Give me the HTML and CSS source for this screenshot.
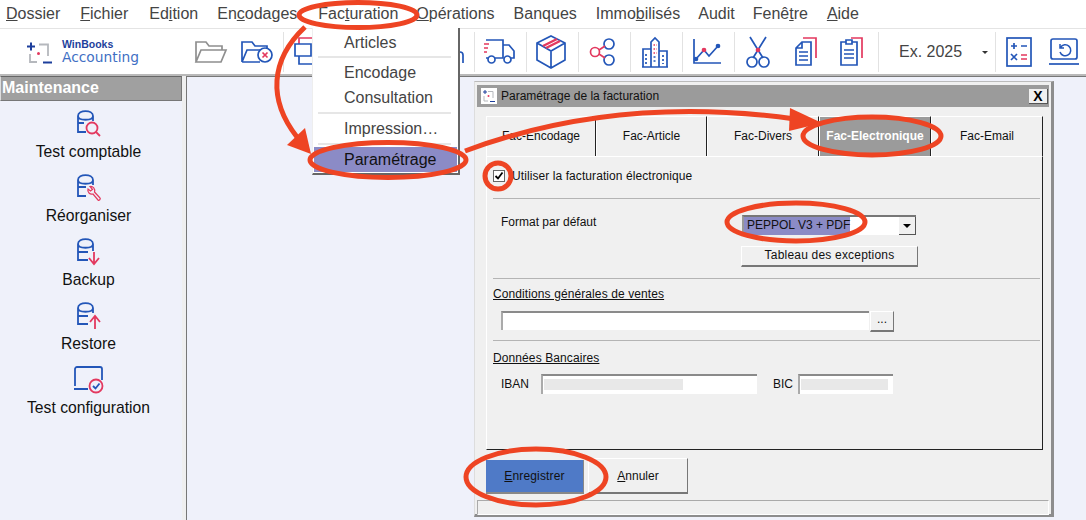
FILE: index.html
```html
<!DOCTYPE html>
<html lang="fr">
<head>
<meta charset="utf-8">
<title>WinBooks Accounting</title>
<link rel="stylesheet" href="styles.css">
</head>
<body>
<div class="app">
  <nav class="menubar">
    <span class="m m1"><u>D</u>ossier</span>
    <span class="m m2"><u>F</u>ichier</span>
    <span class="m m3">Ed<u>i</u>tion</span>
    <span class="m m4">En<u>c</u>odages</span>
    <span class="m m5">Fac<u>t</u>uration</span>
    <span class="m m6"><u>O</u>pérations</span>
    <span class="m m7">Banques</span>
    <span class="m m8">Immo<u>b</u>ilisés</span>
    <span class="m m9">Audit</span>
    <span class="m m10">Fenê<u>t</u>re</span>
    <span class="m m11"><u>A</u>ide</span>
  </nav>

  <header class="toolbar">
    <div class="logo">
      <svg class="logo-mark" width="30" height="26" viewBox="0 0 30 26" fill="none">
        <path d="M1 6.500H9M5 2.500V10.500" stroke="#1d3f9c" stroke-width="2"/>
        <path d="M13 4.500H22V16M4 14V22H11" stroke="#b5b8bd" stroke-width="1.800"/>
        <circle cx="12.500" cy="13.500" r="1.500" fill="#e3395f"/>
        <path d="M17 22.500H26" stroke="#1d3f9c" stroke-width="2"/>
      </svg>
      <div class="logo-text"><span class="logo-brand">WinBooks</span><span class="logo-prod">Accounting</span></div>
    </div>
    <div class="tool tool-a">
      <svg width="34" height="24" viewBox="0 0 34 24" fill="none" stroke="#8f8f8f"><path d="M2 22V2H12L15 6H28V10M2 22H27L32 10H7L2 22Z"/></svg>
    </div>
    <div class="tool tool-b">
      <svg width="34" height="24" viewBox="0 0 34 24" fill="none" stroke="#2356b8"><path d="M2 22V2H12L15 6H27V9M2 22H20M2 22L7 10H20"/><circle cx="25" cy="15" r="7"/><path d="M22.500 12.500L27.500 17.500M27.500 12.500L22.500 17.500" stroke="#e3395f"/></svg>
    </div>
    <div class="tool">
      <svg width="30" height="32" viewBox="0 0 30 32" fill="none"><path d="M6 8V2H22" stroke="#e3395f"/><path d="M2 8H18V20H2ZM6 20V28H24" stroke="#2356b8"/></svg>
    </div>
    <div class="tool"></div>
    <div class="tool tool-c">
      <svg width="30" height="30" viewBox="0 0 30 30" fill="none" stroke="#2356b8"><path d="M22 26V18C22 14 28 14 28 18V26"/></svg>
    </div>
    <div class="tool">
      <svg width="32" height="26" viewBox="0 0 32 26" fill="none" stroke="#2356b8"><path d="M3 1H20V19H12M20 6H26L31 12V19H28M3 19H5"/><path d="M1 5H6M1 9H5M1 13H4" stroke="#e3395f"/><circle cx="8.500" cy="20.500" r="3.500"/><circle cx="24.500" cy="20.500" r="3.500"/></svg>
    </div>
    <div class="tool">
      <svg width="32" height="36" viewBox="0 0 32 36" fill="none" stroke="#2356b8"><path d="M16 2L30 9V26L16 34L2 26V9ZM2 9L16 17L30 9M16 17V34"/><path d="M8 12L22 5M11 14L25 7" stroke="#e3395f" stroke-width="2.500"/></svg>
    </div>
    <div class="tool">
      <svg width="28" height="30" viewBox="0 0 28 30" fill="none"><circle cx="20" cy="7" r="5" stroke="#2356b8"/><circle cx="20" cy="23" r="5" stroke="#2356b8"/><circle cx="6" cy="15" r="4.500" stroke="#e3395f"/><path d="M10 13L16 9M10 17L16 21" stroke="#e3395f"/></svg>
    </div>
    <div class="tool">
      <svg width="28" height="32" viewBox="0 0 28 32" fill="none" stroke="#2356b8"><path d="M10 31V6L14 2L18 6V31M10 31V13H2V31M18 31V15H26V31M1 31H27"/><path d="M12.500 9H15.500M12.500 13H15.500M12.500 17H15.500" stroke="#e3395f" stroke-dasharray="1.500 1"/><path d="M12.500 21H15.500M12.500 25H15.500M5 18V28M22 19V28" stroke-dasharray="2 2"/></svg>
    </div>
    <div class="tool">
      <svg width="30" height="28" viewBox="0 0 30 28" fill="none" stroke="#2356b8"><path d="M2 1V25H29"/><path d="M4 21L12 12L17 18L26 8"/><circle cx="4" cy="21" r="1.500" fill="#2356b8"/><circle cx="12" cy="12" r="1.500" fill="#e3395f" stroke="#e3395f"/><circle cx="26" cy="8" r="1.500" fill="#2356b8"/></svg>
    </div>
    <div class="tool tool-wide">
      <svg class="ico-sc" width="24" height="32" viewBox="0 0 24 32" fill="none" stroke="#2356b8"><path d="M4 1L17 22M20 1L7 22"/><circle cx="6" cy="26" r="5"/><circle cx="18" cy="26" r="5"/><circle cx="12" cy="14" r="1.500" fill="#e3395f" stroke="#e3395f"/></svg>
      <svg class="ico-doc" width="24" height="32" viewBox="0 0 24 32" fill="none"><path d="M9 2H22V22" stroke="#e3395f"/><path d="M8 6H17V29H2V12ZM8 6V12H2" stroke="#2356b8"/><path d="M5 16H14M5 20H14M5 24H14" stroke="#2356b8"/></svg>
      <svg class="ico-clip" width="24" height="32" viewBox="0 0 24 32" fill="none"><path d="M12 2H23V22" stroke="#e3395f"/><path d="M7 6H2V29H18V6H13M7 4H13V8H7ZM5 14H15M5 18H15M5 22H15" stroke="#2356b8"/></svg>
    </div>
    <div class="exercise"><span class="ex-label">Ex. 2025</span><span class="ex-arrow"></span></div>
    <div class="tool tool-calc">
      <svg width="26" height="30" viewBox="0 0 26 30" fill="none"><rect x="1" y="1" width="24" height="28" stroke="#2356b8"/><path d="M5 9H11M8 6V12M15 9H21M5 17L11 23M11 17L5 23" stroke="#2356b8"/><path d="M15 18H21M15 22H21" stroke="#e3395f"/></svg>
    </div>
    <div class="tool tool-last">
      <svg width="30" height="28" viewBox="0 0 30 28" fill="none" stroke="#2356b8"><rect x="2" y="1" width="26" height="20" rx="2"/><path d="M0 26H30"/><path d="M11 6L11 10H15M11.500 9.500A5.500 5.500 0 1 1 11 14" stroke-width="1.500"/></svg>
    </div>
  </header>

  <div class="main">
    <aside class="sidebar">
      <div class="side-head">Maintenance</div>
      <div class="side-list">
        <div class="side-item">
          <svg class="side-ico" width="26" height="28" viewBox="0 0 26 28" fill="none" stroke-width="1.800"><path d="M2 6C2 -0.500 17 -0.500 17 6V11M2 6C2 11 17 11 17 6M2 6V22H10M2 13H8" stroke="#2356b8"/><circle cx="16" cy="18" r="5.500" stroke="#e3395f"/><path d="M20 22L24 26" stroke="#e3395f"/></svg>
          <span>Test comptable</span>
        </div>
        <div class="side-item">
          <svg class="side-ico" width="26" height="28" viewBox="0 0 26 28" fill="none" stroke-width="1.800"><path d="M2 6C2 -0.500 17 -0.500 17 6V11M2 6C2 11 17 11 17 6M2 6V22H10M2 13H10" stroke="#2356b8"/><path d="M12 15C11 18 14 21 17 20L22 26C23 27 25 25 24 24L18.500 18C19.500 15 17 12 14 12.500L16.500 15.500L14.500 17Z" stroke="#e3395f" stroke-width="1.200"/></svg>
          <span>Réorganiser</span>
        </div>
        <div class="side-item">
          <svg class="side-ico" width="26" height="28" viewBox="0 0 26 28" fill="none" stroke-width="1.800"><path d="M2 6C2 -0.500 17 -0.500 17 6V13M2 6C2 11 17 11 17 6M2 6V22H12M2 14H12" stroke="#2356b8"/><path d="M18 14V25M13 20L18 26L23 20" stroke="#e3395f"/></svg>
          <span>Backup</span>
        </div>
        <div class="side-item">
          <svg class="side-ico" width="26" height="28" viewBox="0 0 26 28" fill="none" stroke-width="1.800"><path d="M2 6C2 -0.500 17 -0.500 17 6V11M2 6C2 11 17 11 17 6M2 6V22H12M2 14H12" stroke="#2356b8"/><path d="M19 27V14M14 20L19 14L24 20" stroke="#e3395f"/></svg>
          <span>Restore</span>
        </div>
        <div class="side-item">
          <svg class="side-ico side-wide" width="30" height="28" viewBox="0 0 30 28" fill="none" stroke-width="1.800"><path d="M1 20V3C1 2 2 1 3 1H26C27 1 28 2 28 3V14" stroke="#2356b8"/><path d="M0 23H14" stroke="#2356b8" stroke-width="2"/><circle cx="22" cy="20" r="6.500" stroke="#e3395f"/><path d="M19 20L21.500 22.500L25.500 17.500" stroke="#2356b8"/></svg>
          <span>Test configuration</span>
        </div>
      </div>
    </aside>
    <div class="splitter"></div>
    <div class="workspace"></div>
  </div>
</div>

<div class="dropdown">
  <div class="dd-item">Articles</div>
  <div class="dd-sep dd-sep1"></div>
  <div class="dd-item">Encodage</div>
  <div class="dd-item">Consultation</div>
  <div class="dd-sep"></div>
  <div class="dd-item">Impression…</div>
  <div class="dd-sep dd-sep3"></div>
  <div class="dd-item dd-active">Paramétrage</div>
</div>

<section class="dialog">
  <div class="titlebar">
    <svg class="title-ico" width="16" height="16" viewBox="0 0 16 16" fill="none"><rect width="16" height="16" fill="#fff"/><path d="M2 4H6M4 2V6" stroke="#1d3f9c"/><path d="M7 3.500H12V10M3 8V13H7" stroke="#b5b8bd"/><circle cx="7.500" cy="8" r="1" fill="#e3395f"/><path d="M9 13.500H14" stroke="#1d3f9c"/></svg>
    <span class="title-text">Paramétrage de la facturation</span>
    <span class="close">X</span>
  </div>
  <div class="tabs">
    <div class="tab t1">Fac-Encodage</div>
    <div class="tab t2">Fac-Article</div>
    <div class="tab t3">Fac-Divers</div>
    <div class="tab t4 tab-on">Fac-Electronique</div>
    <div class="tab t5">Fac-Email</div>
  </div>
  <div class="panel">
    <div class="sec sec1">
      <span class="check"><svg width="10" height="10" viewBox="0 0 10 10" fill="none" stroke="#000" stroke-width="1.800"><path d="M1.500 5L4 7.500L8.500 1.500"/></svg></span>
      <span>Utiliser la facturation électronique</span>
    </div>
    <div class="sec sec2">
      <div class="fmt-row">
        <span class="fmt-label">Format par défaut</span>
        <div class="combo"><span class="combo-val">PEPPOL V3 + PDF</span><span class="combo-btn"></span></div>
      </div>
      <div class="btn btn-exc">Tableau des exceptions</div>
    </div>
    <div class="sec sec3">
      <div class="sec-title">Conditions générales de ventes</div>
      <div class="cond-row"><div class="field field-cond"></div><div class="btn btn-dots">...</div></div>
    </div>
    <div class="sec sec4">
      <div class="sec-title">Données Bancaires</div>
      <div class="bank-row">
        <span class="lbl-iban">IBAN</span>
        <div class="field field-iban"><span class="mask mask-iban"></span></div>
        <span class="lbl-bic">BIC</span>
        <div class="field field-bic"><span class="mask mask-bic"></span></div>
      </div>
    </div>
  </div>
  <div class="actions">
    <div class="btn-save"><u>E</u>nregistrer</div>
    <div class="btn-cancel"><u>A</u>nnuler</div>
  </div>
  <div class="status"></div>
</section>

<svg class="annot" width="1086" height="520" viewBox="0 0 1086 520" fill="none" stroke="#ee4423" stroke-width="5">
  <ellipse cx="358" cy="15" rx="59" ry="12.500"/>
  <path d="M305 27C270 60 268 100 297 137"/>
  <path d="M311 154L287 145L305 128Z" fill="#ee4423" stroke="none"/>
  <ellipse cx="388" cy="160" rx="78" ry="17.500"/>
  <path d="M465 151C570 112 680 103 795 119"/>
  <path d="M822 123L789 131L790 108Z" fill="#ee4423" stroke="none"/>
  <ellipse cx="872" cy="136" rx="69" ry="19"/>
  <circle cx="498" cy="176" r="13"/>
  <ellipse cx="796" cy="222" rx="69" ry="19"/>
  <ellipse cx="536" cy="477" rx="70" ry="28"/>
</svg>
</body>
</html>
```

FILE: styles.css
```css
* { box-sizing: border-box; }
html, body { margin: 0; padding: 0; }
body {
  width: 1086px;
  height: 520px;
  overflow: hidden;
  position: relative;
  font-family: "Liberation Sans", Arial, sans-serif;
  background: #eff1fa;
}
.app { display: flex; flex-direction: column; height: 520px; }

/* menu bar */
.menubar {
  display: flex;
  height: 29px;
  align-items: center;
  background: #fff;
  border-bottom: 1px solid #e4e4e4;
  font-size: 16px;
  color: #444;
  padding-left: 6px;
  flex: none;
}
.m { white-space: nowrap; }
.m2 { margin-left: 20px; }
.m3 { margin-left: 21px; }
.m4 { margin-left: 19px; }
.m5 { margin-left: 21px; }
.m6 { margin-left: 18px; }
.m7 { margin-left: 19px; }
.m8 { margin-left: 19px; }
.m9 { margin-left: 18px; }
.m10 { margin-left: 18px; }
.m11 { margin-left: 19px; }

/* toolbar */
.toolbar {
  display: flex;
  height: 47px;
  flex: none;
  background: #fff;
  border-bottom: 2px solid #b9b9b9;
  padding-top: 3px;
}
.logo { width: 188px; flex: none; display: flex; align-items: center; padding-left: 26px; }
.logo-mark { flex: none; }
.logo-text { display: flex; flex-direction: column; margin-left: 6px; margin-top: -3px; }
.logo-brand { font: bold 10.500px/11px "Liberation Sans", sans-serif; color: #1d3f9c; }
.logo-prod { font: 13.800px/14px "DejaVu Sans", sans-serif; color: #3f6fc4; }
.tool {
  width: 52px;
  flex: none;
  display: flex;
  align-items: center;
  justify-content: center;
  border-right: 1px solid #e2e2e2;
  height: 40px;
  padding-right: 3px;
}
.tool svg { stroke-width: 1.700px; }
.tool-a { width: 46px; border-right: 0; padding-right: 0; }
.tool-b { width: 50px; }
.tool-c { width: 87px; justify-content: flex-end; padding-right: 9px; }
.tool-wide { width: 144px; justify-content: flex-start; padding-left: 11px; }
.ico-doc { margin-left: 24px; }
.ico-clip { margin-left: 21px; }
.exercise {
  width: 117px;
  flex: none;
  height: 40px;
  display: flex;
  align-items: center;
  border-right: 1px solid #e2e2e2;
  padding-left: 20px;
  font-size: 16px;
  color: #444;
}
.ex-arrow {
  margin-left: 20px;
  border-left: 3px solid transparent;
  border-right: 3px solid transparent;
  border-top: 3px solid #333;
}
.tool-calc { width: 46px; border-right: 0; padding-right: 0; }
.tool-last { width: 44px; border-right: 0; padding-right: 0; }

/* main area */
.main { flex: 1; display: flex; min-height: 0; }
.sidebar { width: 182px; flex: none; background: #eff1fa; }
.side-head {
  height: 25px;
  background: #a0a0a0;
  border: 1px solid #777;
  border-left-color: #ddd;
  border-top-color: #666;
  color: #fff;
  font-weight: bold;
  font-size: 16px;
  line-height: 22px;
  padding-left: 1px;
}
.side-list { display: flex; flex-direction: column; padding: 9px 5px 0 0; }
.side-item {
  height: 64px;
  display: flex;
  flex-direction: column;
  align-items: center;
  font-size: 15.700px;
  color: #111;
}
.side-ico { display: block; height: 28px; margin-bottom: 4px; flex: none; }
.side-item span { line-height: 20px; }
.splitter { width: 5px; flex: none; background: #efefef; border-right: 1px solid #777; }
.workspace { flex: 1; background: #eff1fa; border-top: 1px solid #777; }

/* dropdown */
.dropdown {
  position: absolute;
  left: 312px;
  top: 28px;
  width: 148px;
  height: 147px;
  background: #fff;
  border-right: 2px solid #666;
  border-bottom: 2px solid #666;
  border-left: 1px solid #eee;
  padding: 3px 1px 0;
  font-size: 16px;
  color: #444;
}
.dd-item { height: 25px; line-height: 24px; padding-left: 30px; }
.dd-sep { height: 2px; margin: 1px 6px 3px 4px; background: #e6e6e6; }
.dd-sep1 { margin-top: 0; margin-bottom: 3px; }
.dd-sep3 { margin-bottom: 2px; }
.dd-active { background: #8b8bc6; color: #111; line-height: 26px; }

/* dialog */
.dialog {
  position: absolute;
  left: 474px;
  top: 81px;
  width: 580px;
  height: 436px;
  background: #f0f0f0;
  border-right: 3px solid #8d8d8d;
  border-bottom: 3px solid #8d8d8d;
  border-top: 1px solid #bbb;
  border-left: 1px solid #ddd;
  padding: 3px 2px 0;
  font-size: 12px;
  color: #111;
}
.titlebar {
  height: 22px;
  background: #9b9b9b;
  display: flex;
  align-items: center;
  padding-left: 4px;
  padding-right: 1px;
}
.title-ico { flex: none; }
.title-text { margin-left: 4px; flex: 1; color: #111; font-size: 12px; }
.close {
  width: 19px;
  height: 15px;
  background: #f0f0f0;
  border-right: 1px solid #555;
  border-bottom: 1px solid #555;
  font-weight: bold;
  font-size: 14px;
  line-height: 14px;
  text-align: center;
  color: #000;
}
.tabs { display: flex; margin: 9px 0 0 9px; height: 40px; }
.tab {
  height: 40px;
  border-top: 1px solid #fff;
  border-left: 1px solid #fff;
  border-right: 1px solid #222;
  line-height: 38px;
  text-align: center;
}
.t1 { width: 110px; }
.t2 { width: 111px; }
.t3 { width: 112px; }
.t4 { width: 112px; }
.t5 { width: 112px; }
.tab-on { background: #9b9b9b; color: #fff; font-weight: bold; }
.panel {
  margin-left: 9px;
  width: 557px;
  height: 294px;
  border-top: 1px solid #fff;
  border-left: 1px solid #fff;
  border-right: 1px solid #222;
  border-bottom: 1px solid #222;
  padding: 0 2px 0 6px;
}
.sec { border-bottom: 1px solid #b4b4b4; }
.sec1 { height: 42px; display: flex; align-items: center; padding-bottom: 3px; gap: 7px; letter-spacing: .08px; }
.check {
  width: 12px;
  height: 12px;
  background: #fff;
  border: 1px solid #666;
  display: flex;
  align-items: center;
  justify-content: center;
}
.sec2 { height: 80px; padding: 16px 0 0 8px; }
.fmt-row { display: flex; align-items: flex-start; }
.fmt-label { width: 241px; line-height: 14px; }
.combo {
  width: 174px;
  height: 20px;
  background: #fff;
  border-top: 2px solid #777;
  border-left: 2px solid #999;
  display: flex;
  align-items: stretch;
}
.combo-val { width: 106px; background: #8b8bc6; line-height: 17px; padding-left: 3px; white-space: nowrap; }
.combo-btn {
  margin-left: auto;
  width: 17px;
  background: #f0f0f0;
  border-right: 1px solid #555;
  border-bottom: 1px solid #555;
  position: relative;
}
.combo-btn::after {
  content: "";
  position: absolute;
  left: 4px;
  top: 7px;
  border-left: 4px solid transparent;
  border-right: 4px solid transparent;
  border-top: 4px solid #000;
}
.btn {
  background: #f0f0f0;
  border-top: 1px solid #fff;
  border-left: 1px solid #fff;
  border-right: 1px solid #777;
  border-bottom: 2px solid #777;
  text-align: center;
}
.btn-exc { width: 177px; height: 21px; margin: 11px 0 0 240px; line-height: 17px; letter-spacing: .2px; }
.sec3 { height: 62px; padding-top: 8px; }
.sec-title { text-decoration: underline; line-height: 14px; letter-spacing: .1px; }
.cond-row { display: flex; margin: 10px 0 0 8px; align-items: flex-start; }
.field {
  height: 20px;
  background: #fff;
  border-top: 2px solid #8a8a8a;
  border-left: 2px solid #aaa;
  padding: 3px 0 0 1px;
}
.field-cond { width: 368px; height: 19px; }
.btn-dots { width: 24px; height: 21px; margin-left: 1px; line-height: 15px; }
.sec4 { border-bottom: 0; padding-top: 10px; }
.bank-row { display: flex; margin: 9px 0 0 8px; align-items: center; }
.lbl-iban { width: 40px; }
.field-iban { width: 216px; }
.lbl-bic { margin-left: 16px; width: 25px; }
.field-bic { width: 95px; }
.mask { display: block; height: 11px; background: #e8e8e8; }
.mask-iban { width: 139px; }
.mask-bic { width: 87px; }

.actions { display: flex; margin: 8px 0 0 9px; align-items: flex-start; }
.btn-save {
  width: 98px;
  height: 34px;
  margin-top: 2px;
  background: #4f7ac7;
  border-bottom: 2px solid #888;
  border-right: 1px solid #888;
  text-align: center;
  line-height: 33px;
  letter-spacing: .15px;
}
.btn-cancel {
  width: 100px;
  height: 36px;
  margin-left: 4px;
  background: #f0f0f0;
  border-top: 1px solid #fff;
  border-left: 1px solid #fff;
  border-right: 1px solid #777;
  border-bottom: 2px solid #777;
  text-align: center;
  line-height: 35px;
}
.status {
  height: 15px;
  margin-top: 6px;
  border-top: 1px solid #aaa;
  border-left: 1px solid #aaa;
  border-right: 1px solid #fff;
  border-bottom: 1px solid #fff;
}

/* red annotations */
.annot { position: absolute; left: 0; top: 0; pointer-events: none; }
```
